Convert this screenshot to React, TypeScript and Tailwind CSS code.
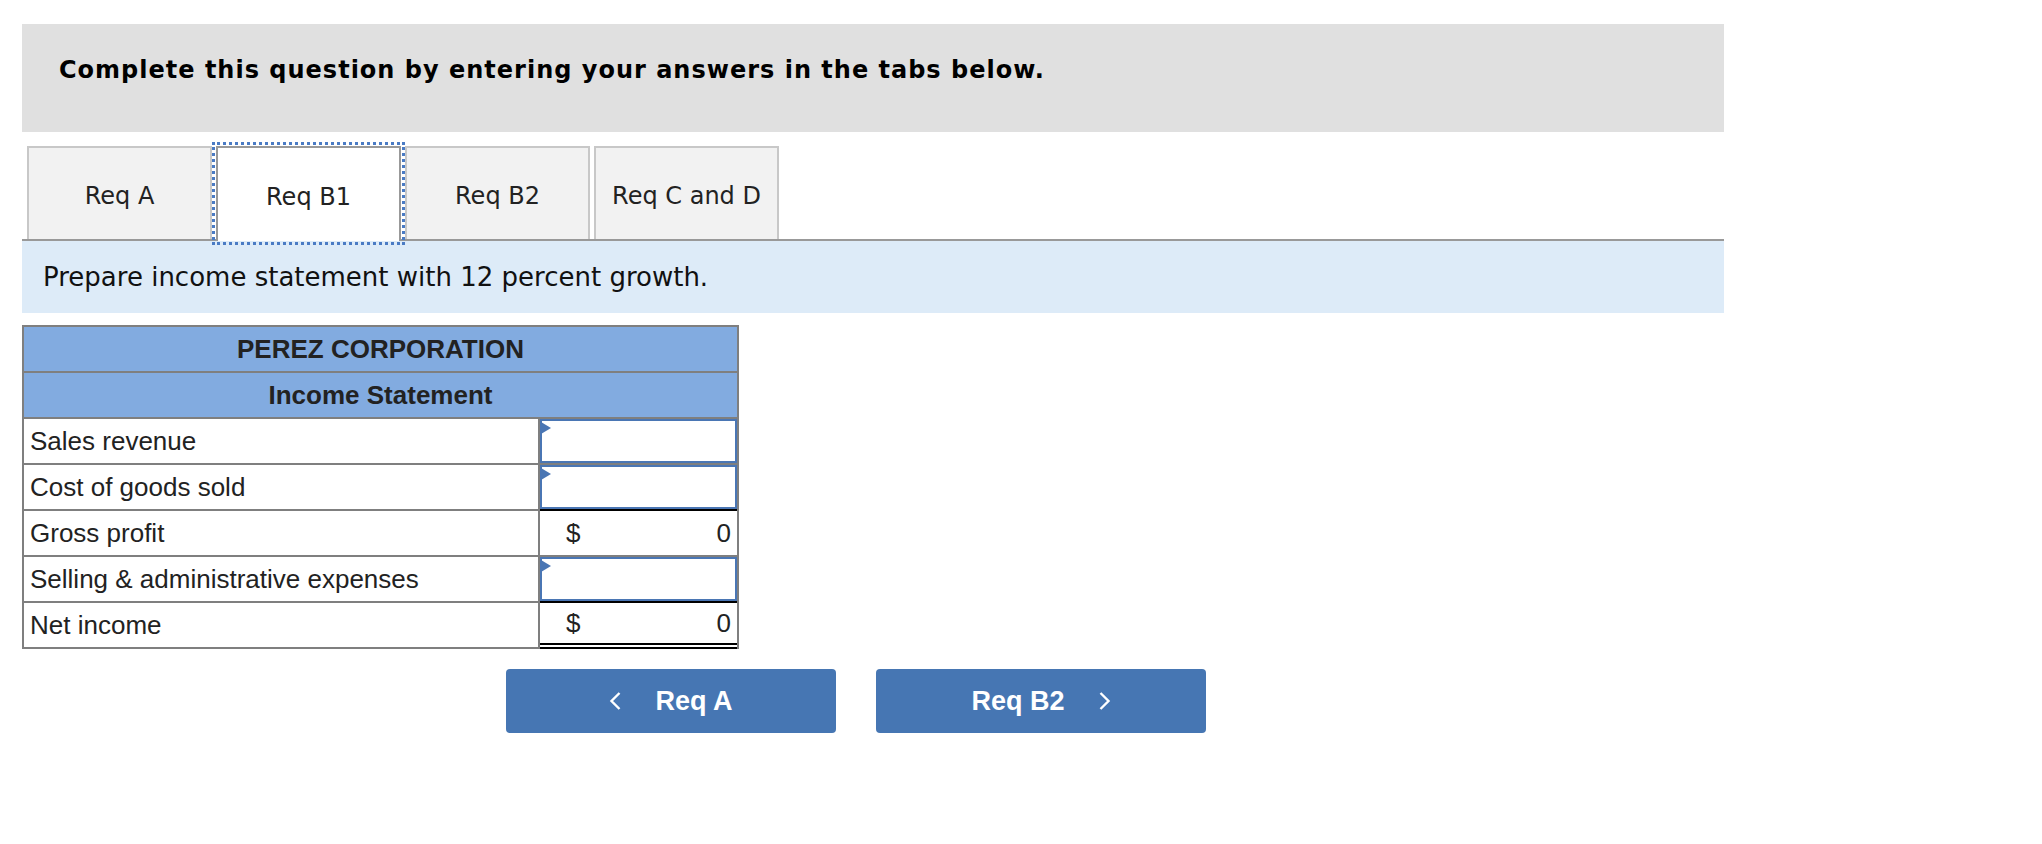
import React from "react";

type Row = {
  label: string;
  kind: "input" | "dollar";
  underline: "none" | "single" | "double";
};

const rows: Row[] = [
  { label: "Sales revenue", kind: "input", underline: "none" },
  { label: "Cost of goods sold", kind: "input", underline: "single" },
  { label: "Gross profit", kind: "dollar", underline: "none" },
  { label: "Selling & administrative expenses", kind: "input", underline: "single" },
  { label: "Net income", kind: "dollar", underline: "double" },
];

function Chevron({ dir }: { dir: "left" | "right" }) {
  return (
    <svg width="12" height="18" viewBox="0 0 12 18" fill="none">
      <path
        d={dir === "left" ? "M10.5 1 L2.5 9 L10.5 17" : "M1.5 1 L9.5 9 L1.5 17"}
        stroke="white"
        strokeWidth="2.4"
        strokeLinecap="butt"
        strokeLinejoin="miter"
      />
    </svg>
  );
}

function ValueCell({ row }: { row: Row }) {
  const border =
    row.underline === "double"
      ? "border-b-[6px] border-double border-black"
      : row.underline === "single"
      ? "border-b-2 border-black"
      : "border-b-2 border-[#7f7f7f]";
  return (
    <div className={`w-[197px] h-full ${border}`}>
      {row.kind === "input" ? (
        <div className="relative h-full border-2 border-[#4a76b4] bg-white">
          <div className="absolute left-[-1px] top-[1px] w-0 h-0 border-y-[6.5px] border-y-transparent border-l-[10px] border-l-[#4a76b4]" />
        </div>
      ) : (
        <div className="h-full flex items-center justify-between pl-[26px] pr-[6px] text-[26px] text-[#222] font-['Liberation_Sans',Arial,sans-serif]">
          <span>$</span>
          <span>0</span>
        </div>
      )}
    </div>
  );
}

export default function App() {
  const tabs = ["Req A", "Req B1", "Req B2", "Req C and D"];
  return (
    <div className="w-[2042px] h-[844px] bg-white overflow-hidden">
      <div className="ml-[22px] pt-[24px] w-[1702px]">
        <div className="h-[108px] bg-[#e0e0e0] pl-[37px] pt-[32px]">
          <p className="font-['DejaVu_Sans',Verdana,sans-serif] font-bold text-[24px] leading-[28px] tracking-[1px] text-black">
            Complete this question by entering your answers in the tabs below.
          </p>
        </div>

        <div className="mt-[14px] flex gap-[4px] pl-[5px] border-b-2 border-[#999999]">
          {tabs.map((t, i) =>
            i === 1 ? (
              <div
                key={t}
                className="relative z-10 -mb-[2px] h-[95px] w-[185px] border-2 border-b-0 border-[#999999] bg-white flex items-center justify-center pt-[4px] outline-[3px] outline-dotted outline-[#4a7bc4] outline-offset-[1px] font-['DejaVu_Sans',Verdana,sans-serif] text-[24px] text-[#222]"
              >
                {t}
              </div>
            ) : (
              <div
                key={t}
                className="h-[93px] w-[185px] border-2 border-b-0 border-[#c8c8c8] bg-[#f2f2f2] flex items-center justify-center pt-[4px] font-['DejaVu_Sans',Verdana,sans-serif] text-[24px] text-[#222]"
              >
                {t}
              </div>
            )
          )}
        </div>

        <div className="h-[72px] bg-[#ddebf8] pl-[21px] flex items-center">
          <p className="font-['DejaVu_Sans',Verdana,sans-serif] text-[26px] leading-[30px] text-[#111]">
            Prepare income statement with 12 percent growth.
          </p>
        </div>

        <div className="mt-[12px] w-[717px] border-t-2 border-x-2 border-[#7f7f7f] font-['Liberation_Sans',Arial,sans-serif]">
          <div className="h-[46px] bg-[#82abe0] border-b-2 border-[#7f7f7f] flex items-center justify-center font-bold text-[26px] text-[#222]">
            PEREZ CORPORATION
          </div>
          <div className="h-[46px] bg-[#82abe0] border-b-2 border-[#7f7f7f] flex items-center justify-center font-bold text-[26px] text-[#222]">
            Income Statement
          </div>
          {rows.map((r) => (
            <div key={r.label} className="h-[46px] flex">
              <div className="w-[516px] h-full border-b-2 border-r-2 border-[#7f7f7f] pl-[6px] flex items-center text-[26px] text-[#222]">
                {r.label}
              </div>
              <ValueCell row={r} />
            </div>
          ))}
        </div>

        <div className="mt-[20px] ml-[484px] flex gap-[40px] font-['Liberation_Sans',Arial,sans-serif]">
          <button className="w-[330px] h-[64px] rounded-[4px] bg-[#4676b3] flex items-center justify-center gap-[34px] text-white font-bold text-[27px]">
            <Chevron dir="left" />
            <span>Req A</span>
          </button>
          <button className="w-[330px] h-[64px] rounded-[4px] bg-[#4676b3] flex items-center justify-center gap-[34px] text-white font-bold text-[27px]">
            <span>Req B2</span>
            <Chevron dir="right" />
          </button>
        </div>
      </div>
    </div>
  );
}
